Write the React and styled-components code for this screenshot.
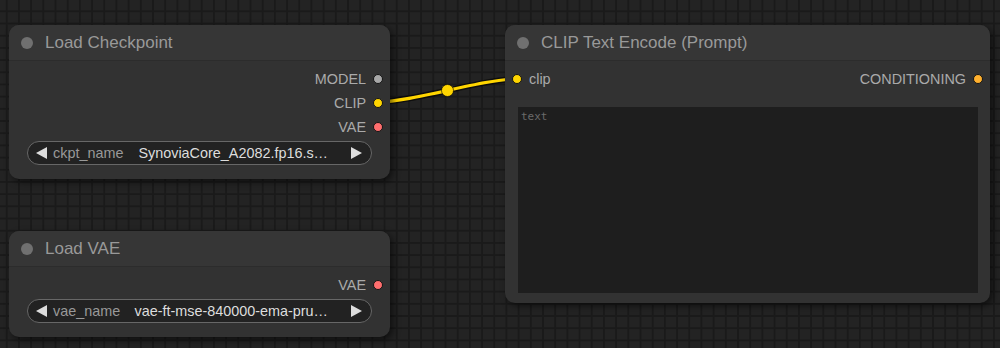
import React from "react";
import styled, { createGlobalStyle } from "styled-components";

const Global = createGlobalStyle`
  html, body { margin: 0; padding: 0; background: #222; }
  body { width: 1000px; height: 348px; overflow: hidden; font-family: "Liberation Sans", Arial, sans-serif; }
`;

const Canvas = styled.div`
  position: relative;
  width: 1000px;
  height: 348px;
  overflow: hidden;
  background-color: #232323;
  background-image:
    linear-gradient(to right, #1a1a1a 1.5px, transparent 1.5px),
    linear-gradient(to bottom, #1a1a1a 1.5px, transparent 1.5px);
  background-size: 12.2px 12.2px;
  background-position: 5.8px 10.4px;
`;

const Links = styled.svg`
  position: absolute;
  left: 0;
  top: 0;
  z-index: 0;
`;

const Node = styled.div`
  position: absolute;
  left: ${(p) => p.$x}px;
  top: ${(p) => p.$y}px;
  width: ${(p) => p.$w}px;
  ${(p) => (p.$h ? `height: ${p.$h}px;` : "")}
  z-index: 1;
  display: flex;
  flex-direction: column;
  background: #323232;
  border-radius: 10px;
  box-shadow: 3px 3px 7px rgba(0, 0, 0, 0.55);
  overflow: hidden;
`;

const Title = styled.div`
  height: 36px;
  flex: none;
  display: flex;
  align-items: center;
  gap: 12px;
  padding-left: 12px;
  background: #363636;
  border-bottom: 1px solid #2c2c2c;
  box-sizing: border-box;
  color: #999;
  font-size: 17px;
`;

const TitleDot = styled.span`
  width: 12px;
  height: 12px;
  border-radius: 50%;
  background: #707070;
`;

const Body = styled.div`
  flex: 1;
  display: flex;
  flex-direction: column;
  padding: 6px 0 ${(p) => p.$pb ?? 14}px;
`;

const Row = styled.div`
  height: 24px;
  display: flex;
  align-items: center;
  justify-content: space-between;
`;

const Slot = styled.div`
  display: flex;
  align-items: center;
  gap: 7px;
  flex-direction: ${(p) => (p.$out ? "row" : "row-reverse")};
  ${(p) => (p.$out ? "margin-left: auto; padding-right: 7px;" : "padding-left: 7px;")}
  color: #aaa;
  font-size: 14.4px;
`;

const Dot = styled.span`
  width: 10px;
  height: 10px;
  box-sizing: border-box;
  border-radius: 50%;
  border: 1.5px solid #141414;
  background: ${(p) => p.$c};
`;

const Widget = styled.div`
  margin: 2px 18px 0;
  height: 24px;
  box-sizing: border-box;
  border: 1px solid #676767;
  border-radius: 12px;
  background: #222;
  display: flex;
  align-items: center;
  padding: 0 9px 0 8px;
  font-size: 14.4px;
  white-space: nowrap;
`;

const Arrow = styled.svg`
  flex: none;
  display: block;
`;

const WLabel = styled.span`
  color: #999;
  margin-left: 6px;
`;

const WValue = styled.span`
  color: #ddd;
  margin-left: auto;
  margin-right: 23px;
`;

const TextArea = styled.div`
  flex: 1;
  margin: 16px 12px 0 13px;
  background: #1e1e1e;
  color: #6a6a6a;
  font-family: "DejaVu Sans Mono", "Liberation Mono", monospace;
  font-size: 11px;
  padding: 3px 3px;
`;

const LeftArrow = () => (
  <Arrow width="11" height="12" viewBox="0 0 11 12">
    <polygon points="11,0 11,12 0,6" fill="#ddd" />
  </Arrow>
);
const RightArrow = () => (
  <Arrow width="11" height="12" viewBox="0 0 11 12">
    <polygon points="0,0 0,12 11,6" fill="#ddd" />
  </Arrow>
);

const Combo = ({ label, value }) => (
  <Widget>
    <LeftArrow />
    <WLabel>{label}</WLabel>
    <WValue>{value}</WValue>
    <RightArrow />
  </Widget>
);

export default function App() {
  const d = "M378 102 C 413 102, 482 79, 517 79";
  return (
    <Canvas>
      <Global />
      <Links width="1000" height="348">
        <path d={d} fill="none" stroke="rgba(0,0,0,0.6)" strokeWidth="6" />
        <path d={d} fill="none" stroke="#ffd500" strokeWidth="3" />
        <circle cx="447.5" cy="90.5" r="6" fill="#ffd500" stroke="rgba(0,0,0,0.6)" strokeWidth="1" />
      </Links>

      <Node $x={9} $y={25} $w={381}>
        <Title>
          <TitleDot />
          Load Checkpoint
        </Title>
        <Body>
          <Row>
            <Slot $out>MODEL<Dot $c="#a8a8a8" /></Slot>
          </Row>
          <Row>
            <Slot $out>CLIP<Dot $c="#ffd500" /></Slot>
          </Row>
          <Row>
            <Slot $out>VAE<Dot $c="#ff6e6e" /></Slot>
          </Row>
          <Combo label="ckpt_name" value="SynoviaCore_A2082.fp16.s…" />
        </Body>
      </Node>

      <Node $x={9} $y={231} $w={381}>
        <Title>
          <TitleDot />
          Load VAE
        </Title>
        <Body>
          <Row>
            <Slot $out>VAE<Dot $c="#ff6e6e" /></Slot>
          </Row>
          <Combo label="vae_name" value="vae-ft-mse-840000-ema-pru…" />
        </Body>
      </Node>

      <Node $x={505} $y={25} $w={485} $h={278}>
        <Title>
          <TitleDot />
          CLIP Text Encode (Prompt)
        </Title>
        <Body $pb={10}>
          <Row>
            <Slot>clip<Dot $c="#ffd500" /></Slot>
            <Slot $out>CONDITIONING<Dot $c="#ffb02e" /></Slot>
          </Row>
          <TextArea>text</TextArea>
        </Body>
      </Node>
    </Canvas>
  );
}
